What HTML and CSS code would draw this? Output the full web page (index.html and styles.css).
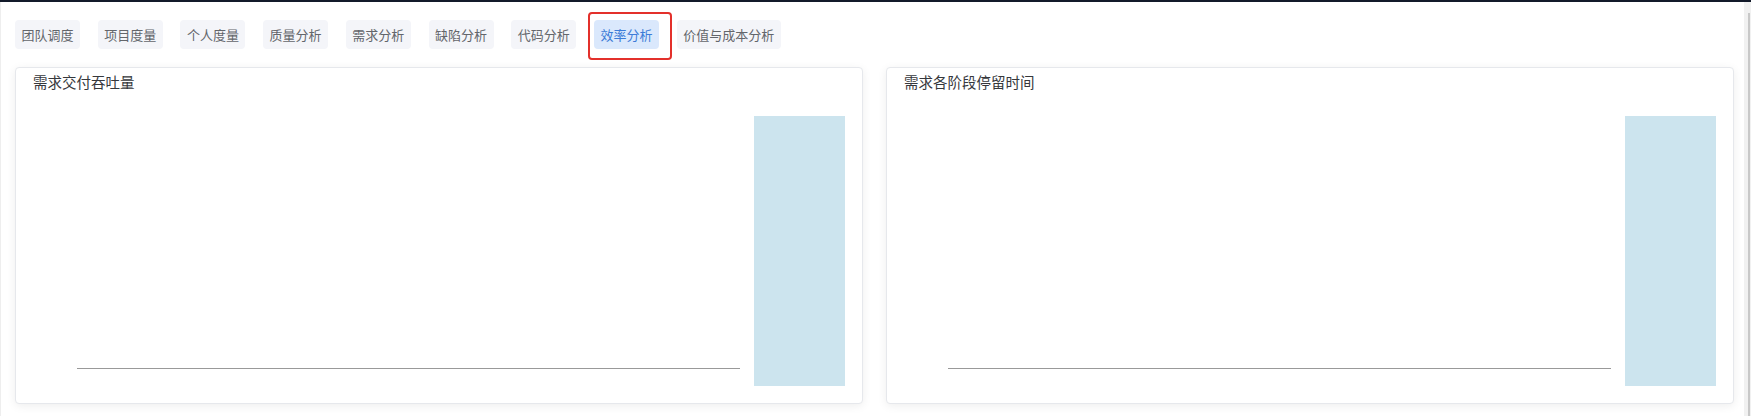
FILE: index.html
```html
<!DOCTYPE html>
<html lang="zh-CN">
<head>
<meta charset="utf-8">
<title>效率分析</title>
<link rel="stylesheet" href="styles.css">
</head>
<body>
<div class="topbar"></div>
<div class="frame">
  <main class="main">
    <nav class="tabs">
      <span class="tab">团队调度</span>
      <span class="tab">项目度量</span>
      <span class="tab">个人度量</span>
      <span class="tab">质量分析</span>
      <span class="tab">需求分析</span>
      <span class="tab">缺陷分析</span>
      <span class="tab">代码分析</span>
      <span class="tab tab-active">效率分析<i class="mark"></i></span>
      <span class="tab">价值与成本分析</span>
    </nav>
    <section class="cards">
      <div class="card">
        <div class="card-title">需求交付吞吐量</div>
        <div class="chart">
          <div class="axis"></div>
          <div class="bar"></div>
        </div>
      </div>
      <div class="card">
        <div class="card-title">需求各阶段停留时间</div>
        <div class="chart">
          <div class="axis"></div>
          <div class="bar"></div>
        </div>
      </div>
    </section>
  </main>
  <div class="scroll"><div class="thumb"></div></div>
</div>
</body>
</html>
```
FILE: styles.css
```css
html, body {
  margin: 0;
  padding: 0;
  background: #ffffff;
}
body {
  width: 1751px;
  height: 416px;
  overflow: hidden;
  font-family: "Noto Sans CJK SC", "Noto Sans", sans-serif;
}
.topbar {
  height: 2px;
  background: #131a2a;
}
.frame {
  display: flex;
  height: 414px;
}
.main {
  flex: 1;
  border-left: 1px solid #eeeeee;
  padding: 18px 0 0 14px;
}
.tabs {
  display: flex;
  gap: 17.7px;
  height: 29px;
}
.tab {
  position: relative;
  display: flex;
  align-items: center;
  padding: 0 6.5px;
  height: 29px;
  font-size: 13px;
  color: #63666b;
  background: #f4f5f9;
  border-radius: 4px;
  white-space: nowrap;
}
.tab-active {
  background: #dae8fc;
  color: #3d7cd8;
}
.mark {
  position: absolute;
  left: -6px;
  top: -8px;
  right: -13px;
  bottom: -11px;
  border: 2px solid #e3302b;
  border-radius: 4px;
}
.cards {
  display: grid;
  grid-template-columns: 848px 848px;
  gap: 23px;
  margin-top: 18px;
}
.card {
  height: 337px;
  box-sizing: border-box;
  border: 1px solid #e6e8ec;
  border-radius: 4px;
  background: #fff;
  box-shadow: 0 2px 10px rgba(0, 0, 0, 0.07);
  display: flex;
  flex-direction: column;
}
.card-title {
  height: 48px;
  box-sizing: border-box;
  padding: 4px 17px 0;
  font-size: 14.5px;
  line-height: 20px;
  color: #36383c;
}
.chart {
  height: 270px;
  display: flex;
  align-items: flex-end;
}
.axis {
  width: 663px;
  height: 253px;
  box-sizing: border-box;
  margin-left: 61px;
  margin-bottom: 17px;
  border-bottom: 1px solid #999999;
}
.bar {
  width: 91px;
  height: 270px;
  margin-left: 14px;
  background: #cce4ee;
}
.scroll {
  width: 7px;
  background: #f1f1f1;
  display: flex;
  justify-content: flex-end;
}
.thumb {
  width: 2px;
  margin: 11px 1px 0 0;
  height: 403px;
  background: #c8c8c8;
}
```
